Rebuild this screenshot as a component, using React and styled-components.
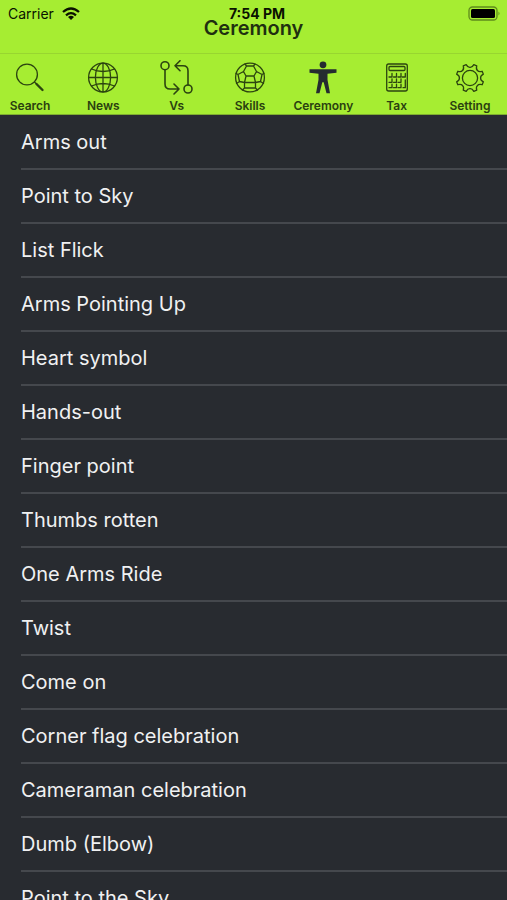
import React from "react";
import styled, { createGlobalStyle } from "styled-components";

const lime = "#a6ed32";
const dark = "#282b30";
const ink = "#2c4410";

const GlobalStyle = createGlobalStyle`
  * { box-sizing: border-box; }
  body { margin: 0; background: ${dark}; font-family: Inter, "Liberation Sans", sans-serif; }
`;

const Screen = styled.div`
  display: flex;
  flex-direction: column;
  height: 100vh;
  overflow: hidden;
  background: ${dark};
`;

const Header = styled.header`
  position: relative;
  flex: none;
  background: ${lime};
`;

const StatusBar = styled.div`
  position: absolute;
  inset: 0 0 auto;
  display: grid;
  grid-template-columns: 1fr auto 1fr;
  align-items: center;
  height: 27px;
  padding: 0 6px 0 8px;
  color: #0a1200;
  font-size: 14px;
`;

const Carrier = styled.span`
  display: flex;
  align-items: center;
  gap: 8px;
`;

const Clock = styled.time`
  padding-left: 5px;
  font-size: 14px;
  font-weight: 700;
`;

const Battery = styled.svg`
  justify-self: end;
`;

const Title = styled.h1`
  display: flex;
  align-items: center;
  justify-content: center;
  height: 54px;
  margin: 0;
  padding-top: 2px;
  border-bottom: 1px solid #98d630;
  color: #1f3010;
  font-size: 20px;
  font-weight: 600;
`;

const Tabs = styled.nav`
  display: flex;
  justify-content: space-between;
  height: 61px;
  padding: 6px 7px 0 0;
  border-bottom: 1px solid #7fae30;
`;

const Tab = styled.button`
  display: flex;
  flex-direction: column;
  align-items: center;
  width: 60px;
  padding: 0;
  border: 0;
  background: none;
  color: ${(p) => (p.$active ? "#252b30" : ink)};
  font-family: inherit;
  cursor: pointer;
`;

const TabLabel = styled.span`
  color: #2a4010;
  font-size: 12px;
  font-weight: 600;
  line-height: 20px;
  white-space: nowrap;
`;

const Icon = styled.svg.attrs({ width: 36, height: 36, viewBox: "0 0 36 36" })`
  flex: none;
  fill: none;
  stroke: currentColor;
  stroke-width: ${(p) => p.$weight || 1.3};
  stroke-linecap: round;
  stroke-linejoin: round;
`;

const List = styled.ul`
  flex: 1;
  min-height: 0;
  margin: 0;
  padding: 1px 0 0 21px;
  overflow-y: auto;
  scrollbar-width: none;
  list-style: none;
`;

const Row = styled.li`
  display: flex;
  align-items: center;
  height: 54px;
  border-bottom: 2px solid #45484d;
  color: #f0f1f2;
  font-size: 20px;
`;

const gearPath = (() => {
  const points = [];
  for (let i = 0; i < 8; i++) {
    const at = (deg, r) => {
      const a = ((i * 45 + deg) * Math.PI) / 180;
      return `${(18 + r * Math.sin(a)).toFixed(2)} ${(18 - r * Math.cos(a)).toFixed(2)}`;
    };
    points.push(`${i ? "L" : "M"}${at(16, 13.9)} L${at(29, 13.9)} Q${at(33, 10.6)} ${at(45, 10.6)} Q${at(57, 10.6)} ${at(61, 13.9)}`);
  }
  return points.join(" ") + "Z";
})();

const ball = "M14.500 6h7l3 5.500-2.500 4.500h-8l-2.500-4.500zM14 16l-1.500 6.500h11L22 16M14.500 6l-1.500-2M21.500 6l1.500-2M11.500 11.500L6 14.500l-2-1M24.500 11.500l5.500 3 2-1M6 14.500l1.500 7-3 2M30 14.500l-1.500 7 3 2M7.500 21.500l5 1v5.500l-2 2M28.500 21.500l-5 1v5.500l2 2M12.500 28h11";

const keys = "M13 13.500v3.500h-3M17.500 13.500v3.500h-3M22 13.500v3.500h-3M26.300 13.500v3.500h-3M13 18.800v3.500h-3M17.500 18.800v3.500h-3M22 18.800v3.500h-3M13 24.200v3.500h-3M17.500 24.200v3.500h-3M22 24.200v3.500h-3M26.300 20v7.700h-2.300";

const tabs = [
  ["Search", <Icon><circle cx="15" cy="14.500" r="10.400" /><path d="M22.500 22l2 2" /><path d="M24.500 24l6 6" strokeWidth="2.400" /></Icon>],
  ["News", <Icon><circle cx="18" cy="17.500" r="14.400" /><ellipse cx="18" cy="17.500" rx="7.600" ry="14.400" /><path d="M18 3.100v28.800M3.600 17.500h28.800M6.500 9q11.500 5 23 0M6.500 26q11.500-5 23 0" /></Icon>],
  ["Vs", <Icon $weight={1.6}><circle cx="6" cy="5.700" r="4" /><circle cx="29" cy="29" r="4" /><path d="M6 9.700v14.300q0 5 5 5h9m-5-5l5 5-5 5M29 25V10.700q0-5-5-5h-8m5-5l-5 5 5 5" /></Icon>],
  ["Skills", <Icon><circle cx="18" cy="17.500" r="14.400" /><path d={ball} /></Icon>],
  ["Ceremony", <Icon><circle cx="18" cy="4.800" r="3.400" fill="currentColor" stroke="none" /><path d="M4.500 9.300h27v3.500l-9 1v6l2.500 13.500h-3.500l-2.800-11h-1.400l-2.800 11h-3.500l2.500-13.500v-6l-9-1z" fill="currentColor" stroke="none" /></Icon>],
  ["Tax", <Icon><rect x="7.700" y="4" width="20.600" height="27" rx="2" /><rect x="10" y="6.500" width="16" height="4" rx="1" /><path d={keys} /></Icon>],
  ["Setting", <Icon><circle cx="18" cy="18" r="7.600" /><path d={gearPath} /></Icon>],
];

const moves = [
  "Arms out", "Point to Sky", "List Flick", "Arms Pointing Up", "Heart symbol",
  "Hands-out", "Finger point", "Thumbs rotten", "One Arms Ride", "Twist", "Come on",
  "Corner flag celebration", "Cameraman celebration", "Dumb (Elbow)", "Point to the Sky",
];

export default function App() {
  return (
    <Screen>
      <GlobalStyle />
      <Header>
        <StatusBar>
          <Carrier>
            Carrier
            <svg width="18" height="14" viewBox="0 0 18 14" fill="none" stroke="currentColor" strokeWidth="2.300">
              <path d="M1 5q8-7 16 0M4 8.300q5-4.300 10 0" />
              <path d="M9 13l-3-3q3-2.300 6 0z" fill="currentColor" stroke="none" />
            </svg>
          </Carrier>
          <Clock>7:54 PM</Clock>
          <Battery width="33" height="15" viewBox="0 0 33 15">
            <rect x="1" y="1" width="28" height="13" rx="3.500" fill="none" stroke="#5f8a1c" strokeWidth="1.300" />
            <rect x="3" y="3" width="24" height="9" rx="1.500" fill="#000" />
            <path d="M30.500 5.500q2 2 0 4z" fill="#5f8a1c" />
          </Battery>
        </StatusBar>
        <Title>Ceremony</Title>
        <Tabs>
          {tabs.map(([name, icon]) => (
            <Tab key={name} $active={name === "Ceremony"}>{icon}<TabLabel>{name}</TabLabel></Tab>
          ))}
        </Tabs>
      </Header>
      <List>{moves.map((m) => <Row key={m}>{m}</Row>)}</List>
    </Screen>
  );
}
